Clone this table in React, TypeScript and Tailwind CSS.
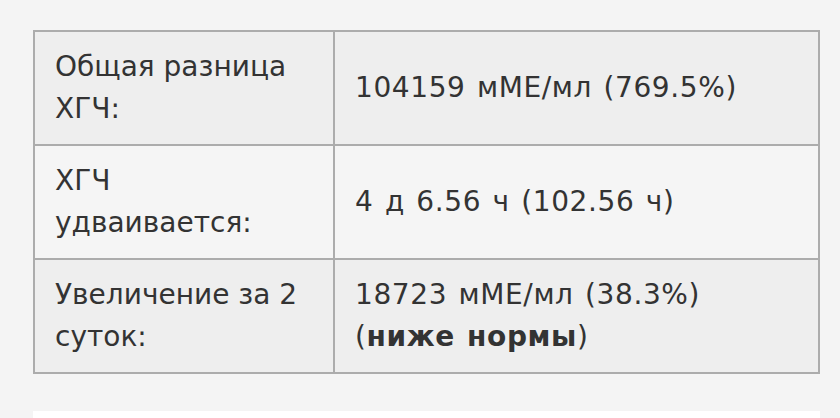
export default function App() {
  const rows = [
    { label: "Общая разница ХГЧ:", value: <>104159 мМЕ/мл (769.5%)</>, bg: "bg-[#eeeeee]" },
    { label: "ХГЧ удваивается:", value: <>4 д 6.56 ч (102.56 ч)</>, bg: "bg-[#f5f5f5]" },
    {
      label: "Увеличение за 2 суток:",
      value: (
        <>
          18723 мМЕ/мл (38.3%)
          <br />(<b className="font-bold">ниже нормы</b>)
        </>
      ),
      bg: "bg-[#eeeeee]",
    },
  ];

  return (
    <div className="min-h-[418px] w-[840px] overflow-hidden bg-[#f4f4f4] pt-[30px] pl-[33px] text-[#333] [font-family:'DejaVu_Sans',Verdana,sans-serif]">
      <table className="w-[787px] border-collapse border-2 border-[#acacac] text-[28px] leading-[42px]">
        <tbody>
          {rows.map((r, i) => (
            <tr key={i} className={r.bg}>
              <td className="w-[300px] border-2 border-[#acacac] px-[20px] py-[14px] align-middle">
                {r.label}
              </td>
              <td className="border-2 border-[#acacac] px-[20px] py-[14px] align-middle tracking-[0.6px] [word-spacing:2px]">
                {r.value}
              </td>
            </tr>
          ))}
        </tbody>
      </table>
      <div className="mt-[37px] h-[20px] w-[787px] bg-white" />
    </div>
  );
}
